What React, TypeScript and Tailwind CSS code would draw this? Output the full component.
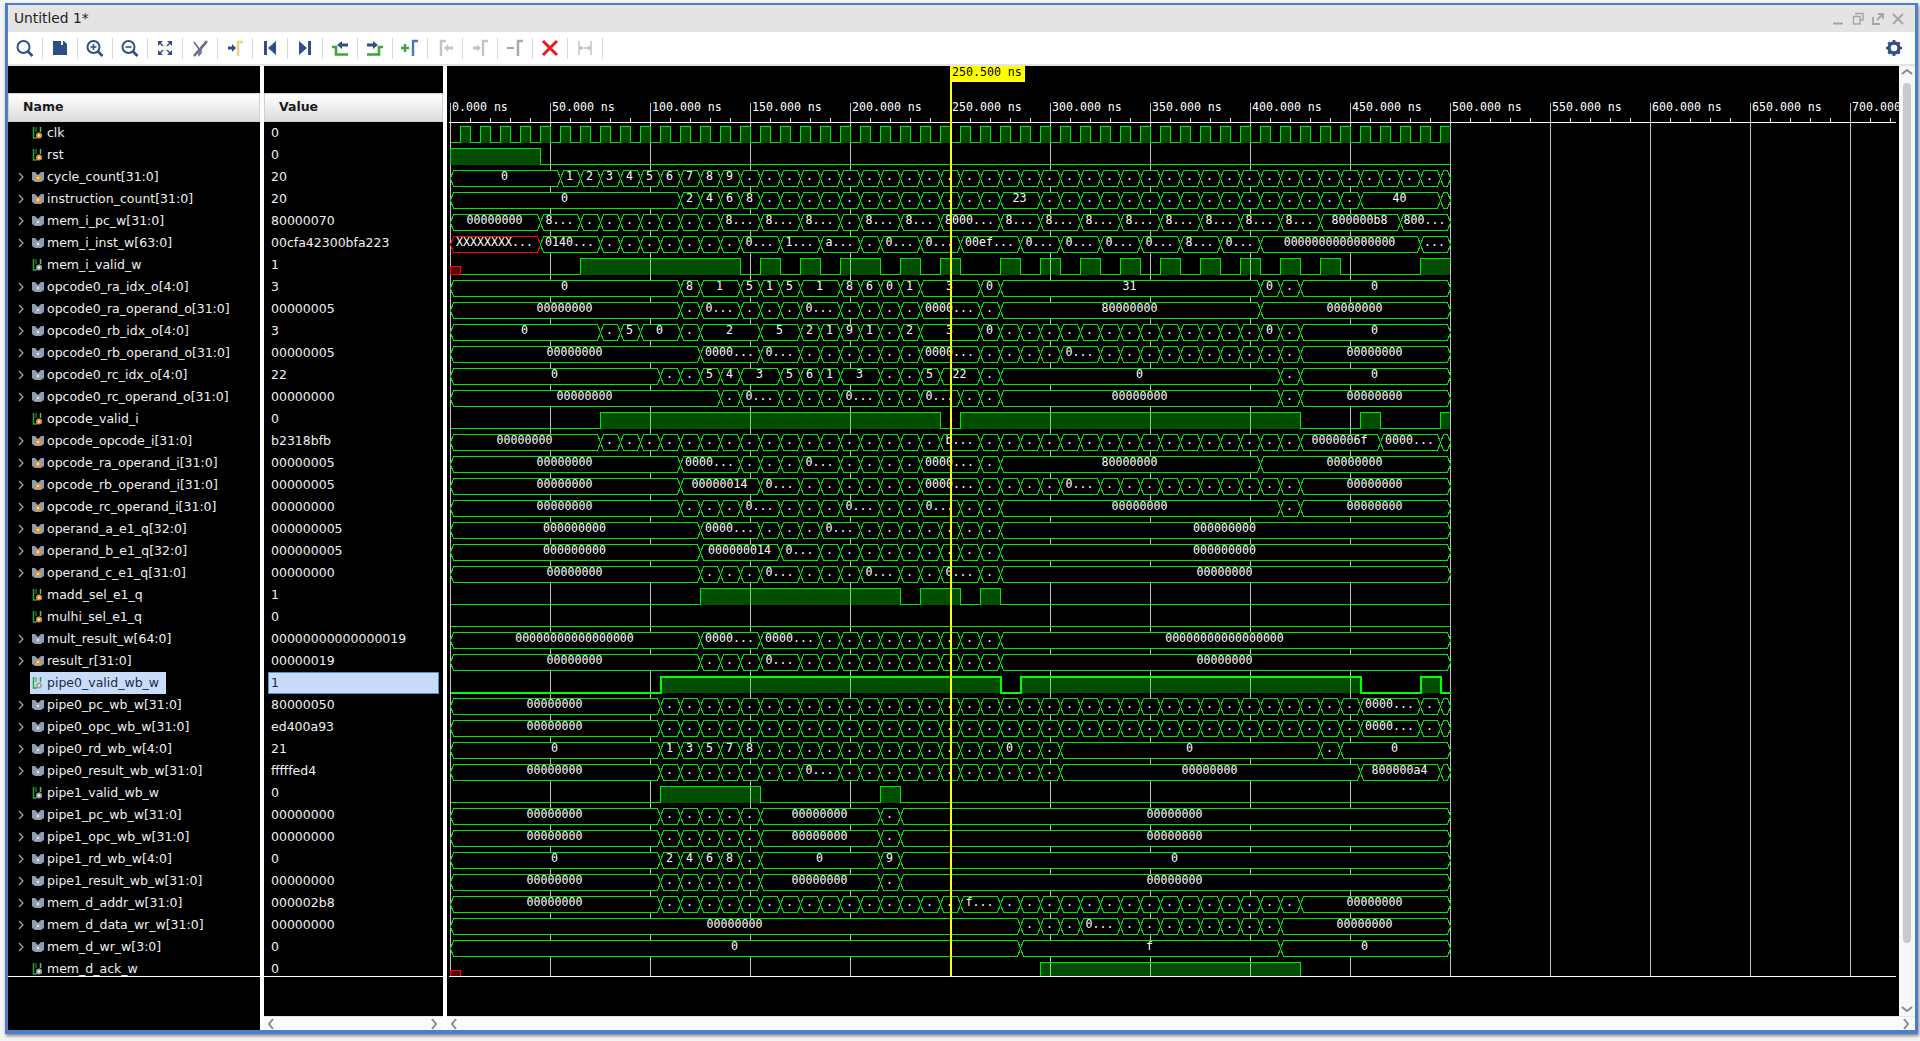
import React from "react"

const NAVY = "#2f4f86"
const rowH = 22
const waveTop = 126

type Wave =
  | { type: "bus"; spec: string }
  | { type: "logic"; highs: number[][]; x?: boolean; thick?: boolean }

interface Row {
  name: string
  value: string
  reg?: boolean
  wave: Wave
}

const bus = (spec: string): Wave => ({ type: "bus", spec })
const logic = (highs: number[][], x = false, thick = false): Wave => ({ type: "logic", highs, x, thick })

const clockHighs: number[][] = []
for (let k = 0; k < 50; k++) clockHighs.push([k, k + 0.5])

const Z8 = "00000000"
const Z9 = "000000000"

const rows: Row[] = [
  { name: "clk", value: "0", reg: true, wave: logic(clockHighs) },
  { name: "rst", value: "0", reg: true, wave: logic([[-0.5, 4]]) },
  { name: "cycle_count[31:0]", value: "20", reg: true, wave: bus("0:0 5:1 6:2 7:3 8:4 9:5 10:6 11:7 12:8 13:9 14:.") },
  { name: "instruction_count[31:0]", value: "20", reg: true, wave: bus("0:0 11:2 12:4 13:6 14:8 15:. 27:23 29:. 45:40 49:.") },
  { name: "mem_i_pc_w[31:0]", value: "80000070", wave: bus(`0:${Z8} 4:8... 6:. 13:8... 15:8... 17:8... 19:. 20:8... 22:8... 24:8000... 27:8... 29:8... 31:8... 33:8... 35:8... 37:8... 39:8... 41:8... 43:800000b8 47:800...`) },
  { name: "mem_i_inst_w[63:0]", value: "00cfa42300bfa223", wave: bus("0:XXXXXXXX... 4:0140... 7:. 14:0... 16:1... 18:a... 20:. 21:0... 23:0... 25:00ef... 28:0... 30:0... 32:0... 34:0... 36:8... 38:0... 40:0000000000000000 48:...") },
  { name: "mem_i_valid_w", value: "1", wave: logic([[6, 14], [15, 16], [17, 18], [19, 21], [22, 23], [24, 25], [27, 28], [29, 30], [31, 32], [33, 34], [35, 36], [37, 38], [39, 40], [41, 42], [43, 44], [48, 49.5]], true) },
  { name: "opcode0_ra_idx_o[4:0]", value: "3", wave: bus("0:0 11:8 12:1 14:5 15:1 16:5 17:1 19:8 20:6 21:0 22:1 23:3 26:0 27:31 40:0 41:. 42:0") },
  { name: "opcode0_ra_operand_o[31:0]", value: "00000005", wave: bus(`0:${Z8} 11:. 12:0... 14:. 17:0... 19:. 23:0000... 26:. 27:80000000 40:${Z8}`) },
  { name: "opcode0_rb_idx_o[4:0]", value: "3", wave: bus("0:0 7:. 8:5 9:0 11:. 12:2 15:5 17:2 18:1 19:9 20:1 21:. 22:2 23:3 26:0 27:. 40:0 41:. 42:0") },
  { name: "opcode0_rb_operand_o[31:0]", value: "00000005", wave: bus(`0:${Z8} 12:0000... 15:0... 17:. 23:0000... 26:. 30:0... 32:. 42:${Z8}`) },
  { name: "opcode0_rc_idx_o[4:0]", value: "22", wave: bus("0:0 10:. 12:5 13:4 14:3 16:5 17:6 18:1 19:3 21:. 23:5 24:22 26:. 27:0 41:. 42:0") },
  { name: "opcode0_rc_operand_o[31:0]", value: "00000000", wave: bus(`0:${Z8} 13:. 14:0... 16:. 19:0... 21:. 23:0... 25:. 27:${Z8} 41:. 42:${Z8}`) },
  { name: "opcode_valid_i", value: "0", reg: true, wave: logic([[7, 24], [25, 42], [45, 46], [49, 49.5]]) },
  { name: "opcode_opcode_i[31:0]", value: "b2318bfb", reg: true, wave: bus(`0:${Z8} 7:. 24:b... 26:. 42:0000006f 46:0000... 49:.`) },
  { name: "opcode_ra_operand_i[31:0]", value: "00000005", reg: true, wave: bus(`0:${Z8} 11:0000... 14:. 17:0... 19:. 23:0000... 26:. 27:80000000 40:${Z8}`) },
  { name: "opcode_rb_operand_i[31:0]", value: "00000005", reg: true, wave: bus(`0:${Z8} 11:00000014 15:0... 17:. 23:0000... 26:. 30:0... 32:. 42:${Z8}`) },
  { name: "opcode_rc_operand_i[31:0]", value: "00000000", reg: true, wave: bus(`0:${Z8} 11:. 14:0... 16:. 19:0... 21:. 23:0... 25:. 27:${Z8} 41:. 42:${Z8}`) },
  { name: "operand_a_e1_q[32:0]", value: "000000005", reg: true, wave: bus(`0:${Z9} 12:0000... 15:. 18:0... 20:. 27:${Z9}`) },
  { name: "operand_b_e1_q[32:0]", value: "000000005", reg: true, wave: bus(`0:${Z9} 12:000000014 16:0... 18:. 27:${Z9}`) },
  { name: "operand_c_e1_q[31:0]", value: "00000000", reg: true, wave: bus(`0:${Z8} 12:. 15:0... 17:. 20:0... 22:. 24:0... 26:. 27:${Z8}`) },
  { name: "madd_sel_e1_q", value: "1", reg: true, wave: logic([[12, 22], [23, 25], [26, 27]]) },
  { name: "mulhi_sel_e1_q", value: "0", reg: true, wave: logic([]) },
  { name: "mult_result_w[64:0]", value: "00000000000000019", wave: bus("0:00000000000000000 12:0000... 15:0000... 18:. 27:00000000000000000") },
  { name: "result_r[31:0]", value: "00000019", reg: true, wave: bus(`0:${Z8} 12:. 15:0... 17:. 27:${Z8}`) },
  { name: "pipe0_valid_wb_w", value: "1", wave: logic([[10, 27], [28, 45], [48, 49]], false, true) },
  { name: "pipe0_pc_wb_w[31:0]", value: "80000050", wave: bus(`0:${Z8} 10:. 45:0000... 48:.`) },
  { name: "pipe0_opc_wb_w[31:0]", value: "ed400a93", wave: bus(`0:${Z8} 10:. 45:0000... 48:.`) },
  { name: "pipe0_rd_wb_w[4:0]", value: "21", wave: bus("0:0 10:1 11:3 12:5 13:7 14:8 15:. 27:0 28:. 30:0 43:. 44:0") },
  { name: "pipe0_result_wb_w[31:0]", value: "fffffed4", wave: bus(`0:${Z8} 10:. 17:0... 19:. 30:${Z8} 45:800000a4 49:.`) },
  { name: "pipe1_valid_wb_w", value: "0", wave: logic([[10, 15], [21, 22]]) },
  { name: "pipe1_pc_wb_w[31:0]", value: "00000000", wave: bus(`0:${Z8} 10:. 15:${Z8} 21:. 22:${Z8}`) },
  { name: "pipe1_opc_wb_w[31:0]", value: "00000000", wave: bus(`0:${Z8} 10:. 15:${Z8} 21:. 22:${Z8}`) },
  { name: "pipe1_rd_wb_w[4:0]", value: "0", wave: bus("0:0 10:2 11:4 12:6 13:8 14:. 15:0 21:9 22:0") },
  { name: "pipe1_result_wb_w[31:0]", value: "00000000", wave: bus(`0:${Z8} 10:. 15:${Z8} 21:. 22:${Z8}`) },
  { name: "mem_d_addr_w[31:0]", value: "000002b8", wave: bus(`0:${Z8} 10:. 25:f... 27:. 42:${Z8}`) },
  { name: "mem_d_data_wr_w[31:0]", value: "00000000", wave: bus(`0:${Z8} 28:. 31:0... 33:. 41:${Z8}`) },
  { name: "mem_d_wr_w[3:0]", value: "0", wave: bus("0:0 28:f 41:0") },
  { name: "mem_d_ack_w", value: "0", wave: logic([[29, 42]], true) },
]

const xOf = (k: number) => 460 + 20 * k
const END = 49.5

function parseBus(spec: string) {
  const tokens = spec.split(" ").map(t => {
    const i = t.indexOf(":")
    return { start: Number(t.slice(0, i)), label: t.slice(i + 1) }
  })
  const segs: { a: number; b: number; label: string }[] = []
  tokens.forEach((t, i) => {
    const next = i + 1 < tokens.length ? tokens[i + 1].start : END
    const a = t.start === 0 ? -0.5 : t.start
    if (t.label === ".") {
      for (let k = a; k < next; k++) segs.push({ a: k, b: Math.min(k + 1, next), label: "." })
    } else {
      segs.push({ a, b: next, label: t.label })
    }
  })
  return segs
}

function BusWave({ spec, top }: { spec: string; top: number }) {
  const segs = parseBus(spec)
  const t = top + 0.5
  const b = top + 16.5
  const m = top + 8.5
  return (
    <g>
      {segs.map((s, i) => {
        const xa = xOf(s.a) + 0.5
        const xb = xOf(s.b) + 0.5
        const isX = s.label.startsWith("XXX")
        const slant = Math.min(3, (xb - xa) / 2)
        return (
          <g key={i}>
            <polygon
              points={`${xa},${m} ${xa + slant},${t} ${xb - slant},${t} ${xb},${m} ${xb - slant},${b} ${xa + slant},${b}`}
              fill="#000000"
              stroke={isX ? "#ff0000" : "#00e600"}
              strokeWidth="1"
              shapeRendering="crispEdges"
            />
            {xb - xa > 12 && (
              <text x={(xa + xb) / 2 - 1} y={top + 10} textAnchor="middle" className="fill-white">
                {s.label}
              </text>
            )}
          </g>
        )
      })}
    </g>
  )
}

function LogicWave({ wave, top }: { wave: Extract<Wave, { type: "logic" }>; top: number }) {
  const hi = top + 0.5
  const lo = top + 16.5
  const startK = wave.x ? 0 : -0.5
  let d = ""
  let cur = startK
  let isFirst = true
  wave.highs.forEach(([a, b]) => {
    if (a > cur) {
      d += `${isFirst ? "M" : "L"}${xOf(cur) + 0.5} ${lo} L${xOf(a) + 0.5} ${lo} L${xOf(a) + 0.5} ${hi} `
    } else {
      d += `M${xOf(a) + 0.5} ${lo} L${xOf(a) + 0.5} ${hi} `
    }
    d += `L${xOf(b) + 0.5} ${hi} `
    if (b < END) d += `L${xOf(b) + 0.5} ${lo} `
    cur = b
    isFirst = false
  })
  if (cur < END) d += `${isFirst ? "M" : "L"}${xOf(cur) + 0.5} ${lo} L${xOf(END) + 0.5} ${lo}`
  return (
    <g shapeRendering="crispEdges">
      {wave.highs.map(([a, b], i) => (
        <rect key={i} x={xOf(a)} y={top} width={xOf(b) - xOf(a)} height={17} fill="#00ff00" fillOpacity="0.3" />
      ))}
      {wave.x && <rect x={450.5} y={top + 8.5} width={10} height={8} fill="#5c0000" stroke="#ff0000" />}
      <path d={d} fill="none" stroke={wave.thick ? "#00ff00" : "#00e600"} strokeWidth={wave.thick ? 2 : 1} />
    </g>
  )
}

function Waveform() {
  const majors: number[] = []
  for (let i = 0; i <= 14; i++) majors.push(i)
  const minors: number[] = []
  for (let x = 450; x < 1896; x += 20) if ((x - 450) % 100 !== 0) minors.push(x)
  return (
    <svg
      viewBox="447 66 1452 950"
      className="block h-[950px] w-[1452px] bg-black font-['DejaVu_Sans_Mono',monospace] text-[11.6px]"
    >
      <defs>
        <clipPath id="rowsClip">
          <rect x="447" y="66" width="1452" height="910" />
        </clipPath>
      </defs>
      <g shapeRendering="crispEdges">
        {majors.map(i => (
          <line key={i} x1={450.5 + 100 * i} x2={450.5 + 100 * i} y1={103} y2={976} stroke="#c0c0c0" />
        ))}
        {minors.map(x => (
          <line key={x} x1={x + 0.5} x2={x + 0.5} y1={118} y2={122} stroke="#ffffff" />
        ))}
        <line x1={449} x2={1896} y1={122.5} y2={122.5} stroke="#ffffff" />
        <line x1={449} x2={1896} y1={976.5} y2={976.5} stroke="#ffffff" />
      </g>
      {majors.map(i => (
        <text key={i} x={452 + 100 * i} y={111} className="fill-white">
          {`${i * 50}.000 ns`}
        </text>
      ))}
      <g clipPath="url(#rowsClip)">
        {rows.map((r, i) => {
          const top = waveTop + rowH * i
          return r.wave.type === "bus" ? (
            <BusWave key={r.name} spec={r.wave.spec} top={top} />
          ) : (
            <LogicWave key={r.name} wave={r.wave} top={top} />
          )
        })}
      </g>
      <rect x="950" y="66" width="2" height="910" fill="#ffff00" />
      <rect x="950" y="66" width="75" height="16" fill="#ffff00" />
      <text x="952" y="76" fill="#000000">250.500 ns</text>
    </svg>
  )
}

function SignalIcon({ bus: isBus, reg, selected }: { bus: boolean; reg?: boolean; selected?: boolean }) {
  const dot = reg ? "#e8962e" : "#9aa4ae"
  if (isBus) {
    return (
      <svg width="14" height="14" viewBox="0 0 14 14" className="shrink-0">
        <path d="M1 2 L4 2 L7 5 L10 2 L13 2 L13 10 L10 12 L4 12 L1 10 Z" fill="#8c9bb0" />
        <circle cx="7" cy="8" r="3" fill={dot} />
        <circle cx="7" cy="8" r="1" fill="#ffffff" />
      </svg>
    )
  }
  return (
    <svg width="14" height="14" viewBox="0 0 14 14" className="shrink-0">
      <path d="M2.5 1 V12 H6" stroke="#2ea043" strokeWidth="1.5" fill="none" />
      <path d="M9.5 1 V6" stroke={selected ? "#2ea043" : "#58c060"} strokeWidth="1.5" fill="none" />
      <path d="M5 1 V6" stroke="#2ea043" strokeWidth="1" fill="none" />
      <circle cx="8" cy="9.5" r="3" fill={dot} />
      <circle cx="8" cy="9.5" r="1" fill="#ffffff" />
    </svg>
  )
}

function NameRow({ row, selected }: { row: Row; selected: boolean }) {
  const isBus = row.wave.type === "bus"
  return (
    <div className="flex h-[22px] shrink-0 items-center">
      <div className="flex w-[22px] shrink-0 justify-end pr-[6px]">
        {isBus && (
          <svg width="6" height="10" viewBox="0 0 6 10">
            <path d="M1 1 L5 5 L1 9" stroke="#a8a8a8" strokeWidth="1.2" fill="none" />
          </svg>
        )}
      </div>
      <div className={`flex h-[22px] items-center gap-[2px] pl-[1px] pr-[7px] ${selected ? "bg-[#c8dcfa] text-[#1c2a44]" : "text-[#f0f0f0]"}`}>
        <SignalIcon bus={isBus} reg={row.reg} selected={selected} />
        <span className="whitespace-pre">{row.name}</span>
      </div>
    </div>
  )
}

function ValueRow({ row, selected }: { row: Row; selected: boolean }) {
  if (selected) {
    return (
      <div className="mx-[4px] flex h-[22px] shrink-0 items-center border border-[#4a94d4] bg-[#c8dcfa] pl-[2px] text-[#1c2a44]">
        {row.value}
      </div>
    )
  }
  return <div className="flex h-[22px] shrink-0 items-center pl-[7px] text-[#f0f0f0]">{row.value}</div>
}

function HeaderCell({ label, pad }: { label: string; pad: string }) {
  return (
    <div className={`flex h-[29px] items-center border border-[#d0d0d0] bg-gradient-to-b from-white to-[#dcdcdc] font-bold text-[#1a1a1a] ${pad}`}>
      {label}
    </div>
  )
}

const Sep = ({ children }: { children?: React.ReactNode }) => (
  <div className="flex h-[21px] w-[35px] items-center justify-center border-r border-[#d9d9d9]">{children}</div>
)

const Ico = ({ children }: { children: React.ReactNode }) => (
  <svg width="20" height="20" viewBox="0 0 20 20">{children}</svg>
)

function Lens({ mark }: { mark?: "plus" | "minus" }) {
  return (
    <Ico>
      <circle cx="8.5" cy="9" r="6" stroke={NAVY} strokeWidth="2" fill="none" />
      <path d="M13 13.5 L17.5 18" stroke={NAVY} strokeWidth="2.6" />
      {mark && <path d="M5.5 9 H11.5" stroke={NAVY} strokeWidth="1.6" />}
      {mark === "plus" && <path d="M8.5 6 V12" stroke={NAVY} strokeWidth="1.6" />}
    </Ico>
  )
}

function Toolbar() {
  const GREEN = "#3aa832"
  const YEL = "#ecd27a"
  const GREY = "#c4c4c4"
  return (
    <div className="flex h-[32px] shrink-0 items-center justify-between bg-white">
      <div className="flex items-center">
        <Sep><Lens /></Sep>
        <Sep>
          <Ico>
            <path d="M3 3 H14 L17 6 V17 H3 Z" fill={NAVY} />
            <rect x="11" y="3" width="2" height="4" fill="#ffffff" />
          </Ico>
        </Sep>
        <Sep><Lens mark="plus" /></Sep>
        <Sep><Lens mark="minus" /></Sep>
        <Sep>
          <Ico>
            <path d="M3 3 H8 L6 5 L8.5 7.5 L7.5 8.5 L5 6 L3 8 Z M17 3 H12 L14 5 L11.5 7.5 L12.5 8.5 L15 6 L17 8 Z M3 17 H8 L6 15 L8.5 12.5 L7.5 11.5 L5 14 L3 12 Z M17 17 H12 L14 15 L11.5 12.5 L12.5 11.5 L15 14 L17 12 Z" fill={NAVY} />
          </Ico>
        </Sep>
        <Sep>
          <Ico>
            <path d="M4 4 L9 11 V17 L11 15 V11 L16 5" stroke={NAVY} strokeWidth="1.6" fill="none" opacity="0.8" />
            <path d="M4 18 L17 3" stroke="#6e6e6e" strokeWidth="2.6" />
          </Ico>
        </Sep>
        <Sep>
          <Ico>
            <path d="M3 8.5 H7 V6 L11 10 L7 14 V11.5 H3 Z" fill={NAVY} />
            <path d="M13 18 V4 H18" stroke={YEL} strokeWidth="2.6" fill="none" />
          </Ico>
        </Sep>
        <Sep>
          <Ico>
            <rect x="4" y="3" width="3" height="14" fill={NAVY} />
            <path d="M16 3 V17 L8 10 Z" fill={NAVY} />
          </Ico>
        </Sep>
        <Sep>
          <Ico>
            <rect x="13" y="3" width="3" height="14" fill={NAVY} />
            <path d="M4 3 V17 L12 10 Z" fill={NAVY} />
          </Ico>
        </Sep>
        <Sep>
          <Ico>
            <path d="M2 9 H6 V16.5 H18" stroke={GREEN} strokeWidth="2.6" fill="none" />
            <path d="M7 7 L12 3 V5.5 H18 V8.5 H12 V11 Z" fill={NAVY} />
          </Ico>
        </Sep>
        <Sep>
          <Ico>
            <path d="M18 9 H14 V16.5 H2" stroke={GREEN} strokeWidth="2.6" fill="none" />
            <path d="M13 7 L8 3 V5.5 H2 V8.5 H8 V11 Z" fill={NAVY} />
          </Ico>
        </Sep>
        <Sep>
          <Ico>
            <path d="M1 10 H9 M5 6 V14" stroke={GREEN} strokeWidth="2.4" />
            <path d="M13 18 V3 H18" stroke="#3f7fb8" strokeWidth="2.4" fill="none" />
          </Ico>
        </Sep>
        <Sep>
          <Ico>
            <path d="M6 18 V3 H11" stroke={GREY} strokeWidth="2.4" fill="none" />
            <path d="M9 10 L13 6.5 V8.5 H18 V11.5 H13 V13.5 Z" fill={GREY} />
          </Ico>
        </Sep>
        <Sep>
          <Ico>
            <path d="M3 8.5 H7 V6.5 L11 10 L7 13.5 V11.5 H3 Z" fill={GREY} />
            <path d="M13 18 V3 H18" stroke={GREY} strokeWidth="2.4" fill="none" />
          </Ico>
        </Sep>
        <Sep>
          <Ico>
            <path d="M2 10 H9" stroke="#a8a8a8" strokeWidth="2.2" />
            <path d="M13 18 V3 H18" stroke="#a8a8a8" strokeWidth="2.4" fill="none" />
          </Ico>
        </Sep>
        <Sep>
          <Ico>
            <path d="M3 3 L17 17 M17 3 L3 17" stroke="#e41e1e" strokeWidth="3" />
          </Ico>
        </Sep>
        <Sep>
          <Ico>
            <path d="M4 3 V17 M16 3 V17 M5 10 H15 M7 8 L5 10 L7 12 M13 8 L15 10 L13 12" stroke={GREY} strokeWidth="1.5" fill="none" />
          </Ico>
        </Sep>
      </div>
      <div className="pr-[12px]">
        <svg width="18" height="18" viewBox="0 0 18 18">
          <circle cx="9" cy="9" r="5" fill="none" stroke={NAVY} strokeWidth="3.4" />
          <path d="M9 1 V17 M1 9 H17 M3.3 3.3 L14.7 14.7 M14.7 3.3 L3.3 14.7" stroke={NAVY} strokeWidth="2.6" strokeDasharray="3 10 3" />
        </svg>
      </div>
    </div>
  )
}

function TitleBar() {
  return (
    <div className="flex h-[27px] shrink-0 items-center justify-between bg-[#e4e4e4] pl-[6px] pr-[10px] text-[#1e1e1e]">
      <span className="text-[13.8px] font-medium">Untitled 1*</span>
      <div className="flex items-center gap-[6px]">
        <svg width="14" height="14" viewBox="0 0 14 14">
          <path d="M2 11.5 H12" stroke="#a6a6a6" strokeWidth="2" />
        </svg>
        <svg width="14" height="14" viewBox="0 0 14 14">
          <path d="M5 3 V1.5 H12 V8 H9 M2.5 4.5 H9 V12 H2.5 Z" stroke="#a6a6a6" strokeWidth="1.4" fill="none" />
        </svg>
        <svg width="14" height="14" viewBox="0 0 14 14">
          <path d="M2 5 V12 H9 M6 8 L12 2 M7 2 H12 V7" stroke="#a6a6a6" strokeWidth="1.8" fill="none" />
        </svg>
        <svg width="14" height="14" viewBox="0 0 14 14">
          <path d="M2 2 L12 12 M12 2 L2 12" stroke="#a6a6a6" strokeWidth="2" />
        </svg>
      </div>
    </div>
  )
}

function Chevron({ dir }: { dir: "left" | "right" | "up" | "down" }) {
  const d = {
    left: "M7 1 L3 6 L7 11",
    right: "M3 1 L7 6 L3 11",
    up: "M1 7 L6 3 L11 7",
    down: "M1 3 L6 7 L11 3",
  }[dir]
  return (
    <svg width="12" height="12" viewBox="0 0 12 12">
      <path d={d} stroke="#8c8c8c" strokeWidth="2" fill="none" />
    </svg>
  )
}

export default function App() {
  const selectedName = "pipe0_valid_wb_w"
  return (
    <div className="h-[1041px] w-[1920px] overflow-hidden bg-[#f4f4f4] pb-[7px] pl-[5px] pr-[2px] pt-[3px] font-['DejaVu_Sans',sans-serif] text-[12.5px]">
      <div className="flex h-[1031px] w-[1913px] flex-col border-x-[3px] border-b-[4px] border-t-[2px] border-[#4a7fcb] shadow-[1px_2px_3px_rgba(0,0,0,0.45)]">
        <TitleBar />
        <Toolbar />
        <div className="h-[2px] shrink-0 bg-[#e4e4e4]" />
        <div className="flex min-h-0 flex-1 bg-white">
          {/* Name column */}
          <div className="flex w-[252px] shrink-0 flex-col bg-black">
            <div className="h-[27px] shrink-0" />
            <HeaderCell label="Name" pad="pl-[14px]" />
            <div className="h-[854px] shrink-0 overflow-hidden">
              {rows.map(r => (
                <NameRow key={r.name} row={r} selected={r.name === selectedName} />
              ))}
            </div>
            <div className="h-px shrink-0 bg-white" />
          </div>
          <div className="w-[4px] shrink-0" />
          {/* Value column */}
          <div className="flex w-[179px] shrink-0 flex-col">
            <div className="flex h-[950px] shrink-0 flex-col bg-black">
              <div className="h-[27px] shrink-0" />
              <HeaderCell label="Value" pad="pl-[14px]" />
              <div className="h-[854px] shrink-0 overflow-hidden">
                {rows.map(r => (
                  <ValueRow key={r.name} row={r} selected={r.name === selectedName} />
                ))}
              </div>
              <div className="h-px shrink-0 bg-white" />
            </div>
            <div className="flex h-[14px] items-center justify-between border-t border-[#e6e6e6] bg-[#fafafa] px-[2px]">
              <Chevron dir="left" />
              <Chevron dir="right" />
            </div>
          </div>
          <div className="w-[4px] shrink-0" />
          {/* Wave column */}
          <div className="flex w-[1468px] shrink-0 flex-col">
            <div className="flex h-[950px] shrink-0">
              <Waveform />
              <div className="flex w-[16px] flex-col items-center bg-[#f7f7f7] pt-[1px]">
                <Chevron dir="up" />
                <div className="mt-[4px] h-[860px] w-[8px] rounded-full bg-[#c9c9c9]" />
                <div className="flex-1" />
                <Chevron dir="down" />
              </div>
            </div>
            <div className="flex h-[14px] items-center justify-between border-t border-[#e6e6e6] bg-[#fafafa] pl-[2px] pr-[2px]">
              <Chevron dir="left" />
              <Chevron dir="right" />
            </div>
          </div>
        </div>
      </div>
    </div>
  )
}
